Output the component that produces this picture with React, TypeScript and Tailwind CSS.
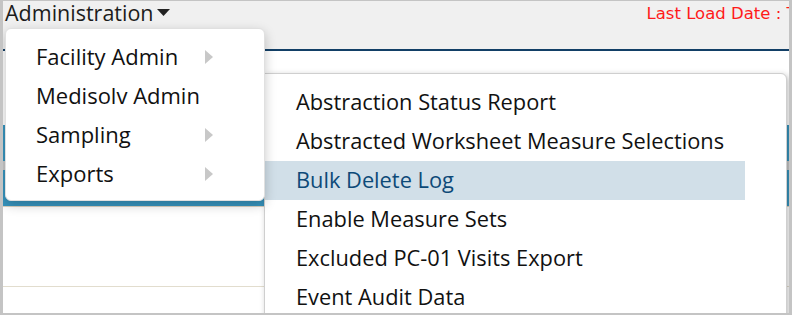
import { useState } from "react"

const adminItems = [
  { label: "Facility Admin", sub: true },
  { label: "Medisolv Admin", sub: false },
  { label: "Sampling", sub: true },
  { label: "Exports", sub: true },
]

const exportItems = [
  "Abstraction Status Report",
  "Abstracted Worksheet Measure Selections",
  "Bulk Delete Log",
  "Enable Measure Sets",
  "Excluded PC-01 Visits Export",
  "Event Audit Data",
]

function Caret() {
  return (
    <svg width="13" height="7" viewBox="0 0 13 7" className="ml-[3px] mt-[8px]">
      <path d="M0 0 H13 L6.5 7 Z" fill="#222" />
    </svg>
  )
}

function SubArrow() {
  return (
    <svg width="8" height="14" viewBox="0 0 8 14">
      <path d="M0 0 L8 7 L0 14 Z" fill="#c8c8c8" />
    </svg>
  )
}

export default function App() {
  const [active] = useState("Bulk Delete Log")

  return (
    <div
      className="relative w-[792px] h-[315px] overflow-hidden bg-white border-t border-x-[3px] border-b-[2px] border-[#c4c4c4]"
      style={{ fontFamily: "'Open Sans', sans-serif" }}
    >
      {/* Header bar */}
      <div className="h-[50px] bg-[#f0f0f0] border-b-2 border-[#123f66] flex">
        <div className="flex items-start pl-[2px] text-[21.5px] leading-[24px] text-[#1c1c1c]">
          Administration
          <Caret />
        </div>
        <div
          className="ml-[477px] shrink-0 pt-[1px] text-[16.5px] text-[#ff1a1a] whitespace-nowrap"
          style={{ fontFamily: "'DejaVu Sans', Verdana, sans-serif" }}
        >
          Last Load Date : T
        </div>
      </div>

      {/* Page body behind the menus */}
      <div className="h-[74px]" />
      <div className="h-[36px] bg-[#3795bf]" />
      <div className="h-[9px] bg-[#c8c8c8]" />
      <div className="h-[37px] bg-[#3795bf] border-b border-[#d9d2c2]" />
      <div className="h-[80px] border-b border-[#e2ddce]" />

      {/* Administration dropdown */}
      <div className="absolute left-[2px] top-[27px] z-20 w-[260px] rounded-[6px] bg-white pt-[8px] pb-[7px] shadow-[0_4px_12px_rgba(0,0,0,0.22)] border border-[#e0e0e0]">
        {adminItems.map((item) => (
          <div
            key={item.label}
            className="h-[39px] flex items-center justify-between pl-[30px] pr-[51px] text-[22px] text-[#111]"
          >
            <span>{item.label}</span>
            {item.sub && <SubArrow />}
          </div>
        ))}
      </div>

      {/* Exports submenu */}
      <div className="absolute left-[261px] top-[72px] z-10 w-[523px] h-[260px] rounded-tr-[6px] bg-white pt-[9px] border border-[#cfcfcf] shadow-[2px_2px_6px_rgba(0,0,0,0.25)]">
        {exportItems.map((label) => (
          <div
            key={label}
            className={`h-[39px] w-[480px] flex items-center pl-[31px] text-[21.8px] ${
              label === active ? "bg-[#d1dfe8] text-[#0d4a78]" : "text-[#111]"
            }`}
          >
            {label}
          </div>
        ))}
      </div>
    </div>
  )
}
